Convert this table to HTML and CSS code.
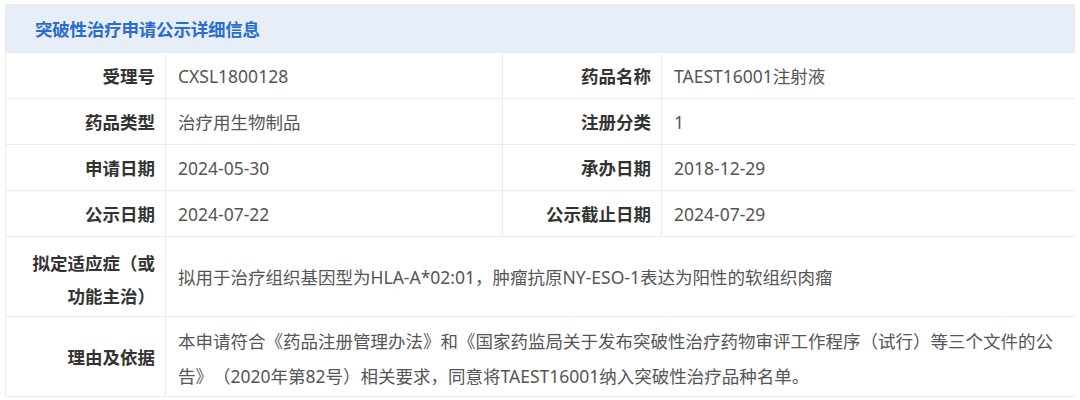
FILE: index.html
```html
<!DOCTYPE html>
<html lang="zh-CN">
<head>
<meta charset="utf-8">
<title>突破性治疗申请公示详细信息</title>
<link rel="stylesheet" href="styles.css">
</head>
<body>
<table class="info">
  <colgroup>
    <col class="c-label">
    <col class="c-value">
    <col class="c-label2">
    <col class="c-value2">
  </colgroup>
  <thead>
    <tr class="head-row"><th colspan="4" class="title">突破性治疗申请公示详细信息</th></tr>
  </thead>
  <tbody>
    <tr class="row">
      <th class="label">受理号</th><td class="value">CXSL1800128</td>
      <th class="label">药品名称</th><td class="value">TAEST16001注射液</td>
    </tr>
    <tr class="row">
      <th class="label">药品类型</th><td class="value">治疗用生物制品</td>
      <th class="label">注册分类</th><td class="value">1</td>
    </tr>
    <tr class="row">
      <th class="label">申请日期</th><td class="value">2024-05-30</td>
      <th class="label">承办日期</th><td class="value">2018-12-29</td>
    </tr>
    <tr class="row">
      <th class="label">公示日期</th><td class="value">2024-07-22</td>
      <th class="label">公示截止日期</th><td class="value">2024-07-29</td>
    </tr>
    <tr class="row tall">
      <th class="label multi">拟定适应症（或<br>功能主治）</th>
      <td class="value" colspan="3">拟用于治疗组织基因型为HLA-A*02:01，肿瘤抗原NY-ESO-1表达为阳性的软组织肉瘤</td>
    </tr>
    <tr class="row tall">
      <th class="label">理由及依据</th>
      <td class="value long" colspan="3">本申请符合《药品注册管理办法》和《国家药监局关于发布突破性治疗药物审评工作程序（试行）等三个文件的公告》（2020年第82号）相关要求，同意将TAEST16001纳入突破性治疗品种名单。</td>
    </tr>
  </tbody>
</table>
</body>
</html>
```

FILE: styles.css
```css
html, body {
  background: #ffffff;
}
body {
  margin: 4px 5px;
  font-family: "Noto Sans", "Noto Sans CJK SC", sans-serif;
  font-size: 17.5px;
  text-spacing-trim: space-all;
}
.info {
  width: 1070px;
  border-collapse: collapse;
  table-layout: fixed;
  border: 1px solid #ececec;
}
.c-label { width: 160px; }
.c-value { width: 337px; }
.c-label2 { width: 159px; }
.c-value2 { width: 414px; }

.head-row { height: 48px; }
.title {
  background: #e7eef8;
  color: #2b6ccf;
  font-weight: 700;
  text-align: left;
  padding: 0 0 0 29px;
  font-family: "Noto Sans CJK SC", sans-serif;
  border: 1px solid #e7eef8;
  letter-spacing: -0.2px;
}
.row { height: 46px; }
.row.tall { height: 80px; }
.label, .value {
  border: 1px solid #ececec;
  vertical-align: middle;
}
.label {
  color: #333333;
  font-weight: 700;
  text-align: right;
  padding: 0 10px 0 4px;
  font-family: "Noto Sans CJK SC", sans-serif;
  line-height: 33px;
  white-space: nowrap;
}
.label.multi {
  padding-top: 4px;
}
.value {
  color: #555555;
  font-weight: 400;
  text-align: left;
  padding: 0 12px;
}
.value.long {
  line-height: 35px;
  padding: 4px 6px 0 12px;
}
```
